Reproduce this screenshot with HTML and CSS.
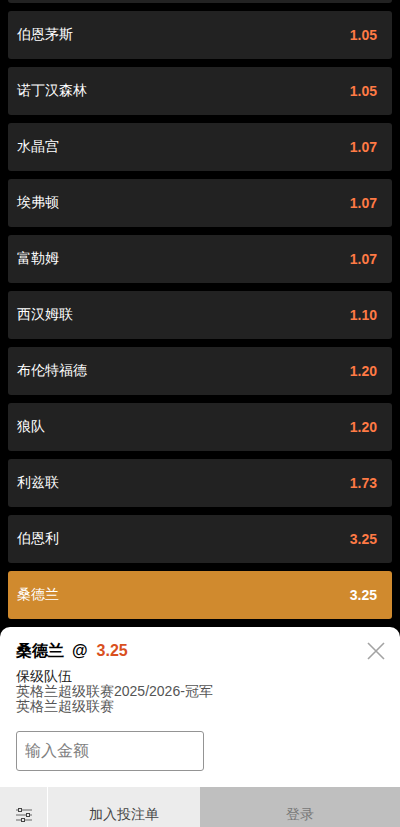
FILE: index.html
```html
<!DOCTYPE html>
<html>
<head>
<meta charset="utf-8">
<title>投注单</title>
<link rel="stylesheet" href="styles.css">
</head>
<body>
<div class="screen">
  <ul class="list">
    <li class="row"></li>
    <li class="row"><span class="name">伯恩茅斯</span><span class="odds">1.05</span></li>
    <li class="row"><span class="name">诺丁汉森林</span><span class="odds">1.05</span></li>
    <li class="row"><span class="name">水晶宫</span><span class="odds">1.07</span></li>
    <li class="row"><span class="name">埃弗顿</span><span class="odds">1.07</span></li>
    <li class="row"><span class="name">富勒姆</span><span class="odds">1.07</span></li>
    <li class="row"><span class="name">西汉姆联</span><span class="odds">1.10</span></li>
    <li class="row"><span class="name">布伦特福德</span><span class="odds">1.20</span></li>
    <li class="row"><span class="name">狼队</span><span class="odds">1.20</span></li>
    <li class="row"><span class="name">利兹联</span><span class="odds">1.73</span></li>
    <li class="row"><span class="name">伯恩利</span><span class="odds">3.25</span></li>
    <li class="row selected"><span class="name">桑德兰</span><span class="odds">3.25</span></li>
  </ul>
  <section class="sheet">
    <div class="sheet-body">
      <div class="title-row">
        <span class="team">桑德兰</span>
        <span class="at">@</span>
        <span class="price">3.25</span>
        <svg class="close" width="18" height="18" viewBox="0 0 18 18" aria-label="关闭">
          <path d="M1 1 L17 17 M17 1 L1 17" stroke="#a3a3a3" stroke-width="1.6" fill="none"/>
        </svg>
      </div>
      <div class="market">保级队伍</div>
      <div class="sub">英格兰超级联赛2025/2026-冠军</div>
      <div class="sub">英格兰超级联赛</div>
      <input class="amount" type="text" placeholder="输入金额">
    </div>
    <div class="actions">
      <button class="settings" aria-label="设置">
        <svg width="16" height="14" viewBox="0 0 16 14">
          <path d="M0 2H16M0 7H16M0 12H16" stroke="#666" stroke-width="1.2" fill="none"/>
          <rect x="2.5" y="0.5" width="3" height="3" fill="#ececec" stroke="#444"/>
          <rect x="10.5" y="5.5" width="3" height="3" fill="#ececec" stroke="#444"/>
          <rect x="5.5" y="10.5" width="3" height="3" fill="#ececec" stroke="#444"/>
        </svg>
      </button>
      <button class="add">加入投注单</button>
      <button class="login">登录</button>
    </div>
  </section>
</div>
</body>
</html>
```
FILE: styles.css
```css
* { box-sizing: border-box; }
html, body { margin: 0; padding: 0; }
body {
  background: #000;
  font-family: "Liberation Sans", sans-serif;
}
.screen {
  position: relative;
  width: 400px;
  height: 827px;
  overflow: hidden;
  background: #000;
}
.list {
  list-style: none;
  margin: -45px 0 0;
  padding: 0 8px;
  display: flex;
  flex-direction: column;
  gap: 8px;
}
.row {
  height: 48px;
  background: #222;
  border-radius: 3px;
  padding: 0 15px 0 9px;
  display: flex;
  align-items: center;
  justify-content: space-between;
  color: #fff;
  font-size: 14px;
}
.odds { color: #ff7a45; font-weight: 700; font-size: 14px; }
.selected { background: #d08a2e; }
.selected .odds { color: #fff; }
.sheet {
  position: absolute;
  left: 0;
  right: 0;
  bottom: 0;
  height: 200px;
  background: #fff;
  border-radius: 10px 10px 0 0;
  display: flex;
  flex-direction: column;
  justify-content: space-between;
}
.sheet-body { padding: 14px 15px 0 16px; }
.title-row {
  display: flex;
  align-items: center;
  height: 20px;
  font-weight: 700;
  font-size: 16px;
  color: #000;
}
.at { margin-left: 8px; }
.price { margin-left: 9px; color: #d9501e; }
.close { margin-left: auto; }
.market { margin-top: 7px; font-size: 14px; line-height: 16px; color: #222; }
.sub { font-size: 14px; line-height: 15px; color: #555; }
.amount {
  display: block;
  width: 188px;
  height: 40px;
  margin-top: 17px;
  padding: 0 8px;
  border: 1px solid #949494;
  border-radius: 3px;
  font: 16px "Liberation Sans", sans-serif;
  background: #fff;
}
.amount::placeholder { color: #808080; opacity: 1; }
.actions { display: flex; height: 40px; }
.actions button {
  border: 0;
  margin: 0;
  padding: 16px 0 0;
  font: 14px "Liberation Sans", sans-serif;
}
.actions .settings {
  width: 47px;
  background: #ececec;
  display: flex;
  align-items: center;
  justify-content: center;
}
.actions .add { width: 152px; margin-left: 1px; background: #ececec; color: #444; }
.actions .login { flex: 1; background: #bfbfbf; color: #777; }
```
